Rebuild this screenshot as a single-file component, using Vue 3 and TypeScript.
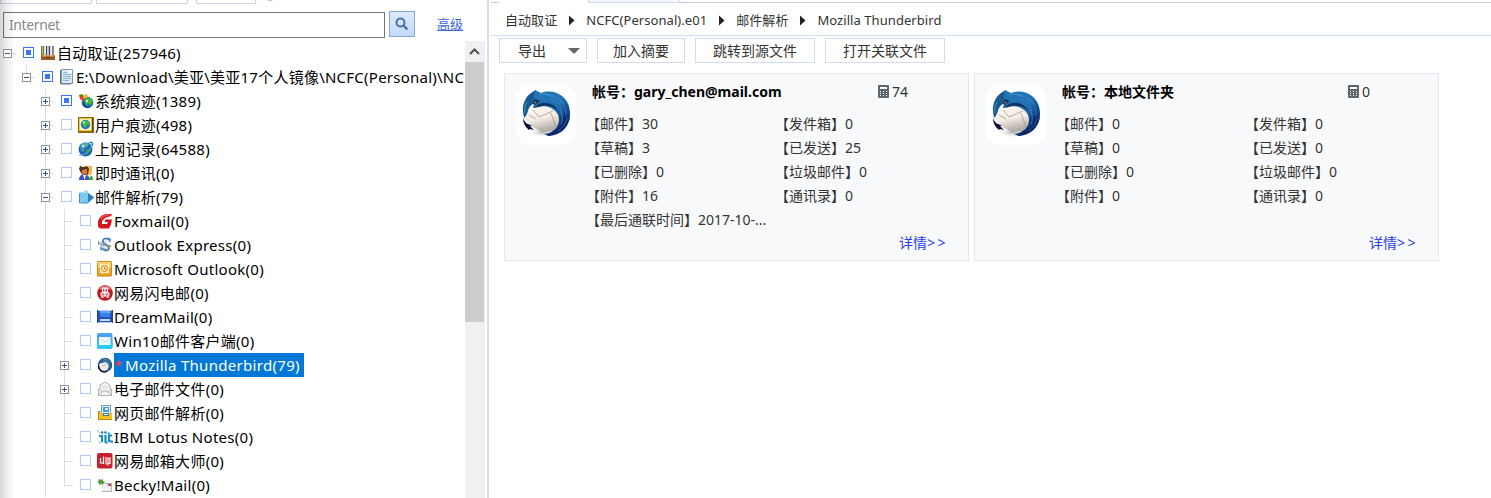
<script setup lang="ts">
import { h, type FunctionalComponent } from 'vue'

interface TreeNode {
  level: number
  label: string
  icon: string
  toggle?: '+' | '-'
  partial?: boolean
  last?: boolean
  selected?: boolean
}

const nodes: TreeNode[] = [
  { level: 0, label: '自动取证(257946)', icon: 'case', toggle: '-', partial: true },
  { level: 1, label: 'E:\\Download\\美亚\\美亚17个人镜像\\NCFC(Personal)\\NC', icon: 'doc', toggle: '-', partial: true, last: true },
  { level: 2, label: '系统痕迹(1389)', icon: 'system', toggle: '+', partial: true },
  { level: 2, label: '用户痕迹(498)', icon: 'user', toggle: '+' },
  { level: 2, label: '上网记录(64588)', icon: 'web', toggle: '+' },
  { level: 2, label: '即时通讯(0)', icon: 'im', toggle: '+' },
  { level: 2, label: '邮件解析(79)', icon: 'mail', toggle: '-' },
  { level: 3, label: 'Foxmail(0)', icon: 'foxmail' },
  { level: 3, label: 'Outlook Express(0)', icon: 'oe' },
  { level: 3, label: 'Microsoft Outlook(0)', icon: 'outlook' },
  { level: 3, label: '网易闪电邮(0)', icon: 'flash' },
  { level: 3, label: 'DreamMail(0)', icon: 'dream' },
  { level: 3, label: 'Win10邮件客户端(0)', icon: 'win10' },
  { level: 3, label: 'Mozilla Thunderbird(79)', icon: 'bird', toggle: '+', selected: true },
  { level: 3, label: '电子邮件文件(0)', icon: 'eml', toggle: '+' },
  { level: 3, label: '网页邮件解析(0)', icon: 'webmail' },
  { level: 3, label: 'IBM Lotus Notes(0)', icon: 'lotus' },
  { level: 3, label: '网易邮箱大师(0)', icon: 'master' },
  { level: 3, label: 'Becky!Mail(0)', icon: 'becky', last: true },
]

type Shape = [string, Record<string, string | number>]
const p = (d: string, fill: string, extra: Record<string, string | number> = {}): Shape => ['path', { d, fill, ...extra }]
const s = (d: string, stroke: string, w = 1): Shape => ['path', { d, fill: 'none', stroke, 'stroke-width': w }]
const c = (cx: number, cy: number, r: number, fill: string): Shape => ['circle', { cx, cy, r, fill }]
const r = (x: number, y: number, width: number, height: number, fill: string, rx = 0): Shape => ['rect', { x, y, width, height, fill, rx }]

const icons: Record<string, Shape[]> = {
  case: [
    r(1, 1, 3, 10, '#6c7a38'), r(2, 1, 1, 8, '#b5c268'), r(4, 1, 2, 10, '#dfe4e8'), r(6, 1, 1, 10, '#44474c'),
    r(7, 1, 2, 9, '#c8ccd4'), s('M9.5 1v9M13 1v9', '#3d4248', 1.2), r(10, 1, 2, 8, '#e1e5e8'),
    p('M1 10h14v5H1z', '#9a5528'), p('M1 10h14l-1 1.6H2z', '#d9a06a'), r(6, 12, 4, 1, '#5c2d10'),
  ],
  doc: [
    p('M2 0h12v15H2z', '#dbe9f4'), s('M2.5 .5h11v14h-11z', '#7e98ab'),
    s('M4 3.500h4M4 5.500h8M4 7.500h8M4 9.500h8M4 11.500h6', '#8bb4d2'), s('M1.5 1v14H12', '#5e7687'), r(9, 1, 4, 3, '#fff'),
  ],
  system: [
    c(9.5, 9.5, 5.8, '#1d66c8'), p('M7 6c3-3 7-1 8 2l-2 4-3-1-1 3-3-2z', '#46b43a'), p('M6 9c1 3 3 5 6 5-4 2-7-1-7-4z', '#0c3e95'),
    p('M1 2l4 0 2 3-2 3-3-2z', '#e2452a'), p('M1 2l3-1 1 2-2 1z', '#4a7d2d'), p('M5 2l4-1 1 3-4 2z', '#f7b928'), c(9, 8, 1.2, '#d9f0ff'),
  ],
  user: [
    r(0, 0, 16, 16, '#8f6a12'), r(1, 1, 13, 13, '#e8c33d'), r(2, 2, 11, 11, '#fff3bf'), r(14, 1, 1, 14, '#5c4308'),
    c(7.5, 7.5, 4.7, '#246fc9'), p('M5 4c3-2 6 0 7 3l-3 1-1 3-3-2-1-3z', '#48b749'), c(6, 5.5, 1.1, '#c9f2da'),
  ],
  web: [
    c(7.5, 8.5, 6.9, '#1e64b8'), p('M2 5c2-4 7-4 9-2l-1 3-3 1-1 4-3-1z', '#3f94bb'), p('M8 8l5-1-1 4-4 3z', '#2f9448'), p('M5 3l4-1 1 2-4 2z', '#67bb7c'),
    s('M1 14c4 1 12-3 13-12', '#69b3e8', 1), s('M10 3c3-3 6-2 4 2', '#2c83d6', 1.300), c(5, 5, 1.2, '#c5ecff'),
  ],
  im: [
    p('M9 1h5v5l-1 5-4 1-2-6z', '#f3b447'), p('M9 15c0-6 6-6 6-1v1z', '#3aa54a'),
    p('M2 1l3 1 4-1 2 3-1 5-3 2-4-3-2-4z', '#563220'), p('M4 5l5-1v5L6 10 4 8z', '#d97a34'), p('M1 15c0-7 9-8 10 0z', '#3e4fc4'), p('M5 10l1.5 5L8 10z', '#fff'),
    p('M10 10l2 3 1-3z', '#fff'),
  ],
  mail: [
    p('M1 4l4-1 4-2 1 3 6 4-6 6H1z', '#52aede'), p('M1 4h9v10H1z', '#79c9ec'), p('M1 4l4-1 4-2v3z', '#9fe0f7'),
    p('M10 4l6 4.5-6 5.5z', '#2e83bd'), s('M1.5 4.500v9.500h8.500', '#3d93c4'), s('M2 14L10 5', '#a9e1f6', .6),
  ],
  foxmail: [
    p('M4 3L9 1h6l-1 2-6 2-3 3v3h5l1-2H7.500l1-2.500H15l-1 5-2 4H3l-2-2V8z', '#d3151c'), p('M4 3l5-2h6l-2 1-6 2-3 3z', '#ee3f44'),
  ],
  oe: [
    p('M1 5l9-2 3 8-9 3z', '#e1e7ed'), s('M2 6l8 3M3 8l4 1M4 11l5 1', '#8795a4', .9),
    s('M12 3C9 0 5 2 6 5s6 3 6 6-5 3-6 1', '#3f77ac', 1.6), p('M10 0l4 2-1 4z', '#3f86c6'), p('M3 10l3 1-2 3z', '#3f86c6'), c(13, 9, 1.2, '#bfa34e'), r(1, 4, 1, 4, '#8896a5'),
  ],
  outlook: [
    r(0, 0, 15, 15.500, '#d08a14', 1.500), r(1, 1, 13, 6, '#fad274'), r(1, 7, 13, 7, '#eba62f'), r(3, 3, 9, 9, '#fff0c9', 1),
    c(7.500, 7.500, 3.400, '#e39b22'), c(7.500, 7.500, 2.200, '#fff4d9'), s('M7.500 6v2h2', '#c97c12'),
  ],
  flash: [
    c(8, 8, 7.800, '#c21620'), p('M2 4c3-5 9-5 12 0l-2 1H4z', '#e8636a'), s('M5.500 3h5v4h-5zM4 8h8v2H4zM4 12h3M9 12h3M8 3v9', '#fff', 1.100), s('M5 10v3M11 10v3', '#fff', 1),
  ],
  dream: [
    r(0, 1, 16, 13, '#b9cdf5'), r(1, 2, 14, 11, '#1f52c2'), r(3, 2, 10, 6, '#3e80e8'), r(3, 2, 10, 2, '#5ba4f3'), r(3, 10, 10, 2, '#c6d9f8'),
    r(0, 1, 1, 13, '#2b3f88'), r(15, 1, 1, 13, '#2b3f88'), r(12, 2.500, 1.500, 1.500, '#a7e04f'),
  ],
  win10: [
    r(0, 0, 15.500, 16, '#4aa1f7', 2), r(0, 7, 15.500, 9, '#2cc9f5', 2), r(2, 4, 11.500, 8, '#f1f9ff', .5), s('M4 6l4 3 4-3', '#a9cfe9', .8),
  ],
  bird: [
    c(8, 8, 7.200, '#1c4673'), c(7, 9, 4.900, '#f3eee6'), p('M2 6C3 1 11-1 14 5c2 5-1 9-5 10 3-3 4-7 1-9-2-2-5 1-8 0z', '#24618f'),
    s('M4 2c4-1 7 1 9 4M6 4c4 0 6 3 6 6', '#6da5ca', .8), s('M5 8l2 1 2-2', '#968f86', .7), s('M1.500 9c0 4 4 7 8 5.500', '#0e1c42', 1.600),
  ],
  eml: [
    p('M1 8l2-1V4l5-3 5 3v3l2 1v7H1z', '#f4f4f4'), s('M3 8V4l5-3 5 3v4M1 14.500L6 10h4l5 4.500zM1.500 14V8l4 3M14.500 14V8l-4 3', '#a9a9a9', .9), s('M5 5h6M5 7h6', '#dadada'),
  ],
  webmail: [
    p('M1 6h3v9H1z', '#bd8b12'), r(3, 0, 11, 10, '#f1f4f6'), s('M4.500 9V.5h9V9', '#7b98ad'), r(6, 2, 6, 5, '#3aa0e5'), r(8, 3, 3, 2, '#d7f2ff'),
    r(2, 8, 13, 7, '#f1c31c'), r(6, 8, 6, 3, '#3b79ac'), r(7, 9, 4, 1, '#f3f8fb'), r(2, 14, 13, 1, '#bd8b12'),
  ],
  lotus: [
    c(5, 3.500, 1.300, '#1587b7'), c(8.500, 3.500, 1.300, '#1587b7'), c(12, 4.500, 1.200, '#37a5d0'), s('M2 7h3v6M8.500 6v7l2 1M15 6.500h-3V12l4 1', '#1c8dc0', 2.200), s('M0 1l3 3M2 14l3-1', '#7faab9', .8),
  ],
  master: [r(0, 0, 15.500, 15.500, '#c8202d', 2), s('M3.500 10.500V5M3 10h3M6.500 3.500V11M9 4v7.500M11 12.500V5h2v5.500h-2', '#fff', 1.200)],
  becky: [
    p('M5 6h10v9H5z', '#ededed'), s('M5 14.500h10M14.500 6v8M8 6.500h6', '#b2b2b2'), p('M1 3l2-1 1 1 2-1v2l2 1-2 2v1L4 7 2 8V6L0 5l2-1z', '#5a9c37'), r(11, 7, 3, 2, '#b9406c'), s('M6 12h5', '#fff'),
  ],
}

const NodeIcon: FunctionalComponent<{ name: string }> = (props) =>
  h('svg', { viewBox: '0 0 16 16', width: 16, height: 16 }, icons[props.name].map(([tag, attrs]) => h(tag, attrs)))
NodeIcon.props = ['name']

const crumbs = ['自动取证', 'NCFC(Personal).e01', '邮件解析', 'Mozilla Thunderbird']

const accounts = [
  {
    name: 'gary_chen@mail.com',
    total: 74,
    stats: [['邮件', '30'], ['发件箱', '0'], ['草稿', '3'], ['已发送', '25'], ['已删除', '0'], ['垃圾邮件', '0'], ['附件', '16'], ['通讯录', '0'], ['最后通联时间', '2017-10-...']],
  },
  {
    name: '本地文件夹',
    total: 0,
    stats: [['邮件', '0'], ['发件箱', '0'], ['草稿', '0'], ['已发送', '0'], ['已删除', '0'], ['垃圾邮件', '0'], ['附件', '0'], ['通讯录', '0']],
  },
]
</script>

<template>
  <div class="app">
    <aside class="side">
      <div class="cut-tabs"><i class="t1" /><i class="t2" /><i class="t3" /><b /></div>
      <div class="search">
        <input class="field" placeholder="Internet" />
        <button class="go">
          <svg width="24" height="24" viewBox="0 0 24 24"><circle cx="10.500" cy="10.500" r="4" fill="none" stroke="#4b6fab" stroke-width="2" /><path d="M13.500 13.500l4 4" stroke="#4b6fab" stroke-width="2.400" /></svg>
        </button>
        <a class="adv">高级</a>
      </div>
      <div class="tree-wrap">
        <div class="tree">
          <div v-for="n in nodes" :key="n.label" class="row">
            <span v-for="g in n.level" :key="g" class="guide" :class="{ line: g === 3 }" />
            <span class="guide own" :class="{ line: n.level > 0, half: n.last }">
              <span v-if="n.toggle" class="toggle" :class="{ plus: n.toggle === '+' }" />
            </span>
            <span class="check" :class="{ partial: n.partial }" />
            <NodeIcon class="icon" :name="n.icon" />
            <span class="label" :class="{ selected: n.selected, path: n.level === 1 }"><em v-if="n.selected">*</em>{{ n.label }}</span>
          </div>
        </div>
        <div class="scroll">
          <svg class="up" width="19" height="21" viewBox="0 0 19 21"><path d="M5 13l4.500-4.500L14 13" fill="none" stroke="#505050" stroke-width="2" /></svg>
          <div class="thumb" />
        </div>
      </div>
      <div class="shade" />
    </aside>

    <main class="main">
      <div class="tabs"><i class="lead" /><i class="active" /><i class="other" /><i class="rest" /></div>
      <nav class="crumbs">
        <template v-for="(t, i) in crumbs" :key="t">
          <svg v-if="i" class="arrow" width="29" height="11" viewBox="0 0 29 11"><path d="M12 .5l5.500 5-5.500 5z" fill="#222" /></svg>
          <span>{{ t }}</span>
        </template>
      </nav>
      <div class="tools">
        <button class="export">导出<svg width="12" height="6" viewBox="0 0 12 6"><path d="M0 0h12L6 6z" fill="#666" /></svg></button>
        <button>加入摘要</button>
        <button class="wide">跳转到源文件</button>
        <button class="wide">打开关联文件</button>
      </div>
      <div class="cards">
        <section v-for="a in accounts" :key="a.name" class="card">
          <div class="logo">
            <svg width="60" height="60" viewBox="0 0 60 60">
              <defs>
                <linearGradient id="wing" x1="0" y1="0" x2=".7" y2="1"><stop offset="0" stop-color="#2477b0" /><stop offset=".5" stop-color="#1f71b8" /><stop offset="1" stop-color="#081d5c" /></linearGradient>
                <linearGradient id="paper" x1="0" y1="0" x2=".3" y2="1"><stop offset="0" stop-color="#fffdf9" /><stop offset=".6" stop-color="#f3ece4" /><stop offset="1" stop-color="#b5afaa" /></linearGradient>
                <radialGradient id="shadow"><stop offset="0" stop-color="#a9a9ac" /><stop offset="1" stop-color="#fff" stop-opacity="0" /></radialGradient>
              </defs>
              <ellipse cx="27" cy="47" rx="16" ry="6" fill="url(#shadow)" />
              <path d="M8 33l5-8 8-5 13-1 9 7 1 12-7 8-11 1-11-6z" fill="url(#paper)" />
              <path d="M17 25l6 7 14-6M13 30l7 4M35 28l5 14" fill="none" stroke="#9a9188" stroke-width=".7" />
              <path d="M7 33c2 5 5 7 9 7l-2 1 4 4-4-1-1 1c-4-3-6-7-6-12z" fill="#070e35" />
              <path d="M20 5C11 9 6 17 7 27l1 6c2-2 3-4 4-7 1-5 5-8 10-9z" fill="#19598f" />
              <path d="M19 5l6 3c8-3 16-1 21 3 5 4 8 10 8 18 0 11-8 20-21 22l-5-2c9-1 15-7 15-14 0-6-3-9-8-12-4-2-8-2-12-1l-6 1c0-2 1-4 3-6-2-2-3-4-1-12z" fill="url(#wing)" />
              <path d="M48 30c0 8-5 16-14 19l-4 1 3 1c12-1 20-8 21-20l-3 5z" fill="#071f62" opacity=".7" />
              <path d="M29 10c8-1 15 3 18 9M33 14c8 0 12 6 13 12M41 13c6 4 9 10 9 17M44 25c3 5 3 10 1 15M51 33c-1 6-5 10-9 13M40 20c4 3 5 7 6 11" fill="none" stroke="#4c94cb" stroke-width=".8" opacity=".65" />
              <path d="M23 10c4-2 10-1 14 2M11 17c-2 4-3 7-2 11" fill="none" stroke="#3e94c6" stroke-width="1" />
              <path d="M17 22c4 0 5-4 9-4 7-1 13 2 16 7-5-4-11-5-17-4-3 1-5 2-8 1z" fill="#10203f" opacity=".75" />
              <path d="M19 14l5 2-5 4-2-1z" fill="#0b2e60" /><circle cx="19.500" cy="17.500" r=".9" fill="#d98d34" />
            </svg>
          </div>
          <div class="body">
            <header class="head">
              <strong>帐号：<span>{{ a.name }}</span></strong>
              <svg width="11" height="13" viewBox="0 0 11 13">
                <rect width="11" height="13" rx="1" fill="#5b666e" /><path d="M2 2h7v2H2zM2 6h1v1H2zM5 6h1v1H5zM8 6h1v1H8zM2 8h1v1H2zM5 8h1v1H5zM8 8h1v1H8zM2 10h1v1H2zM5 10h1v1H5zM8 10h1v1H8z" fill="#fff" />
              </svg>
              <span class="total">{{ a.total }}</span>
            </header>
            <div class="stats">
              <span v-for="st in a.stats" :key="st[0]">【{{ st[0] }}】{{ st[1] }}</span>
            </div>
            <a class="more">详情<span>&gt;&gt;</span></a>
          </div>
        </section>
      </div>
    </main>
  </div>
</template>

<style>
body { overflow: hidden; background: #fff; }
</style>

<style scoped>
.app { display: flex; width: 1491px; height: 498px; overflow: hidden; background: #fff; color: #333; font-family: "Noto Sans", "Noto Sans CJK SC", sans-serif; }
.app * { box-sizing: border-box; }
.side { position: relative; width: 489px; flex: none; display: flex; flex-direction: column; border-right: 2px solid #d5dff2; }
.shade { position: absolute; left: 0; top: 0; width: 15px; height: 498px; background: linear-gradient(90deg, rgba(0,0,0,.16), rgba(0,0,0,.06) 50%, transparent); pointer-events: none; }
.cut-tabs { height: 4px; display: flex; overflow: hidden; }
.cut-tabs i { height: 4px; border: 1px solid #ccd7ee; border-top: 0; }
.t1 { width: 92px; } .t2 { width: 92px; margin-left: 4px; } .t3 { width: 60px; margin-left: 8px; }
.cut-tabs b { width: 10px; height: 10px; margin: -9px 0 0 9px; border-radius: 5px; background: #a9bfe6; }
.search { height: 37px; display: flex; align-items: flex-start; padding: 7px 0 0 3px; }
.field { width: 382px; height: 26px; margin: 1px 4px 0 0; padding: 0 5px 1px; border: 1px solid #767676; background: transparent; font: 14px "Noto Sans", sans-serif; outline: 0; border-radius: 0; letter-spacing: -.4px; }
.field::placeholder { color: #888; }
.go { width: 26px; height: 26px; padding: 0; border: 1px solid #84a7d8; background: linear-gradient(#deebfd, #c2d9fb); }
.go svg { display: block; }
.adv { margin-left: 22px; font-size: 13px; line-height: 27px; color: #3a68d8; text-decoration: underline; }
.tree-wrap { flex: 1; display: flex; min-height: 0; overflow: hidden; }
.tree { width: 465px; padding-left: 3px; overflow: hidden; }
.row { height: 24px; display: flex; align-items: center; white-space: nowrap; }
.guide { position: relative; width: 19px; height: 24px; flex: none; }
.guide.line::before { content: ""; position: absolute; left: 4px; top: 0; width: 1px; height: 24px; background: #dcdcdc; }
.guide.half::before { height: 12px; }
.guide.own::after { content: ""; position: absolute; left: 4px; top: 12px; width: 9px; height: 1px; background: #dcdcdc; }
.toggle { position: absolute; z-index: 1; left: 0; top: 8px; width: 9px; height: 9px; border: 1px solid #919191; background: linear-gradient(#36518f, #36518f) 1px 3px / 5px 1px no-repeat #fff; }
.toggle.plus { background: linear-gradient(#36518f, #36518f) 1px 3px / 5px 1px no-repeat, linear-gradient(#36518f, #36518f) 3px 1px / 1px 5px no-repeat #fff; }
.check { width: 11px; height: 11px; flex: none; margin: 0 6px 1px 1px; border: 1px solid #b5c9f8; background: #fff; }
.check.partial { border-color: #3b74f2; background: linear-gradient(#3b74f2, #3b74f2) 2px 2px / 5px 5px no-repeat #fff; }
.icon { flex: none; margin-right: 1px; }
.label { height: 24px; line-height: 25px; font-size: 15px; letter-spacing: .28px; color: #000; }
.label.path { letter-spacing: .24px; }
.label.selected { letter-spacing: .3px; background: #0078d7; color: #fff; padding-right: 4px; }
.label em { display: inline-block; width: 11px; font-style: normal; color: #f3404c; }
.scroll { width: 20px; background: #f0f0f0; }
.up { display: block; }
.thumb { width: 19px; height: 260px; background: #cdcdcd; }

.main { flex: 1; min-width: 0; padding-left: 2px; }
.tabs { display: flex; height: 3px; }
.tabs i { border-bottom: 1px solid #c9cde3; }
.lead { width: 8px; } .tabs .active { width: 90px; border-bottom: 0; border-right: 1px solid #c9cde3; }
.tabs .other { width: 91px; background: #f3f7fd; border-bottom-color: #cfdaf0; border-right: 1px solid #cfdaf0; }
.rest { flex: 1; }
.crumbs { height: 33px; display: flex; align-items: center; padding: 2px 0 0 14px; border-bottom: 1px solid #d5dff2; font-size: 13px; line-height: 20px; letter-spacing: .06px; }
.tools { display: flex; gap: 10px; padding: 2px 0 0 8px; }
.tools button { width: 88px; height: 25px; padding: 0; border: 1px solid #cfdcf2; background: #fff; color: #333; font: 14px/22px "Noto Sans", "Noto Sans CJK SC", sans-serif; }
.tools .wide { width: 120px; }
.tools .export { display: flex; align-items: center; justify-content: space-between; padding: 0 6px 0 18px; }
.cards { display: flex; gap: 5px; padding: 10px 0 0 13px; }
.card { width: 465px; height: 188px; display: flex; border: 1px solid #e5e9ef; background: #f8f9fb; padding: 11px 0 0 11px; }
.logo { width: 60px; height: 60px; border-radius: 14px; background: #fff; flex: none; }
.logo svg { display: block; }
.body { flex: 1; margin-left: 10px; font-size: 14px; line-height: 24px; display: flex; flex-direction: column; height: 169px; }
.head { display: flex; align-items: center; height: 24px; flex: none; margin: -5px 0 8px 6px; }
.head strong { width: 286px; color: #000; }
.head svg { margin-bottom: 2px; }
.total { margin-left: 3px; }
.stats { display: grid; grid-template-columns: 189px 189px; grid-auto-rows: 24px; white-space: nowrap; }
.more { margin: auto 20px 0 auto; line-height: 22px; color: #2b3cf2; }
.more span { letter-spacing: 2.500px; }
</style>
